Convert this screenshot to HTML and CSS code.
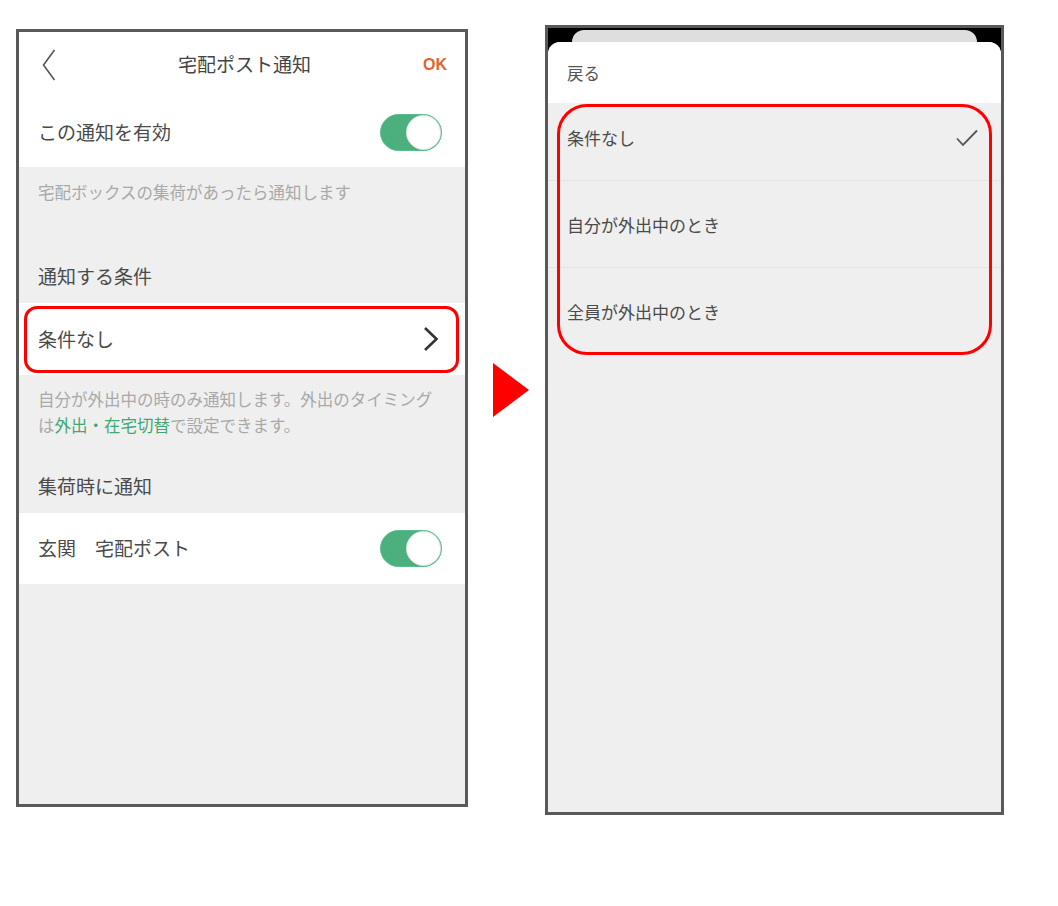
FILE: index.html
```html
<!DOCTYPE html>
<html lang="ja">
<head>
  <meta charset="UTF-8" />
  <meta name="viewport" content="width=device-width, initial-scale=1.0"/>
  <title>宅配ポスト通知</title>
  <link rel="stylesheet" href="styles.css">
</head>
<body>
  <div class="pagina">
    <!-- tela 1: configuracao -->
    <div class="tela tela-config">
      <header class="cabecalho">
        <svg class="voltar" width="14" height="32" viewBox="0 0 14 32"><polyline points="12.5,1 1.5,16 12.5,31" fill="none" stroke="#555" stroke-width="1.6"/></svg>
        <h1>宅配ポスト通知</h1>
        <span class="ok">OK</span>
      </header>
      <div class="linha linha-alta">
        <span>この通知を有効</span>
        <span class="chave"><span class="bolinha"></span></span>
      </div>
      <p class="nota nota-primeira">宅配ボックスの集荷があったら通知します</p>
      <h2 class="secao">通知する条件</h2>
      <div class="linha linha-marcada">
        <span>条件なし</span>
        <svg width="16" height="26" viewBox="0 0 16 26"><polyline points="2,2 13.5,13 2,24" fill="none" stroke="#333" stroke-width="2.6"/></svg>
      </div>
      <p class="nota">自分が外出中の時のみ通知します。外出のタイミング<br>は<span class="link">外出・在宅切替</span>で設定できます。</p>
      <h2 class="secao">集荷時に通知</h2>
      <div class="linha">
        <span>玄関　宅配ポスト</span>
        <span class="chave"><span class="bolinha"></span></span>
      </div>
    </div>

    <div class="seta"></div>

    <!-- tela 2: escolha da condicao -->
    <div class="tela tela-opcoes">
      <div class="fundo-escuro">
        <div class="cartao-atras"></div>
        <div class="folha">
          <div class="folha-topo">戻る</div>
          <div class="opcoes">
            <div class="opcao">
              <span>条件なし</span>
              <svg width="22" height="18" viewBox="0 0 22 18"><polyline points="1,9.5 7,16 21,1.5" fill="none" stroke="#555" stroke-width="1.8"/></svg>
            </div>
            <div class="opcao">自分が外出中のとき</div>
            <div class="opcao">全員が外出中のとき</div>
          </div>
        </div>
      </div>
    </div>
  </div>
</body>
</html>
```

FILE: styles.css
```css
body { margin: 0; background: #fff; font-family: "Noto Sans CJK JP", "Noto Sans", sans-serif; color: #4a4a4a; }
.pagina { display: flex; align-items: flex-start; padding: 25px 0 0 16px; }

.tela { box-sizing: border-box; border: 3px solid #595959; background: #efefef; }
.tela-config { width: 452px; height: 778px; margin-top: 4px; }
.tela-opcoes { width: 459px; height: 790px; margin-left: 16px; display: flex; flex-direction: column; }

.cabecalho { height: 65px; background: #fff; display: grid; grid-template-columns: 1fr auto 1fr; align-items: center; padding: 0 18px 0 23px; }
.cabecalho h1 { margin: 0 0 2px; font-size: 19px; font-weight: 400; color: #444; }
.voltar { display: block; }
.ok { justify-self: end; font-family: "Liberation Sans", Arial, sans-serif; font-weight: bold; font-size: 16px; color: #e2662b; }

.linha { position: relative; height: 71px; background: #fff; display: flex; align-items: center; justify-content: space-between; padding: 0 23px 0 19px; font-size: 19px; }
.linha > span:first-child { margin-bottom: 2px; }
.linha-alta { height: 70px; }
.linha-marcada { height: 72px; padding-right: 26px; }
.linha-marcada::after { content: ""; position: absolute; top: 3px; bottom: 2px; left: 5px; right: 6px; border: 3px solid #f00; border-radius: 13px; pointer-events: none; }
.linha svg { display: block; }

.chave { width: 62px; height: 37px; border-radius: 19px; background: #4caf7e; box-sizing: border-box; border: 1px solid #5dbb8d; display: flex; justify-content: flex-end; align-items: center; padding-right: 1px; }
.bolinha { width: 33px; height: 33px; border-radius: 50%; background: #fff; box-shadow: 0 0 0 1px #d8e6de, 0 1px 2px rgba(0,0,0,0.15); }

.nota { margin: 0; padding: 11px 20px 0 19px; font-size: 16.5px; line-height: 26px; color: #a9a9a9; }
.nota-primeira { padding-top: 12px; padding-bottom: 23px; }
.link { color: #3fa874; }
.secao { margin: 0; padding: 35px 20px 14px 19px; font-size: 19px; line-height: 26px; font-weight: 400; color: #4a4a4a; }

.seta { width: 0; height: 0; margin: 338px 0 0 25px; border-left: 36px solid #f00; border-top: 27px solid transparent; border-bottom: 27px solid transparent; }

.fundo-escuro { flex: 1; background: #000; padding-top: 2px; display: flex; flex-direction: column; }
.cartao-atras { height: 12px; margin: 0 24px; background: #dedede; border-radius: 13px 13px 0 0; }
.folha { flex: 1; background: #efefef; border-radius: 12px 12px 0 0; overflow: hidden; }
.folha-topo { height: 61px; background: #fff; display: flex; align-items: center; padding-left: 19px; font-size: 16.5px; color: #555; }

.opcoes { position: relative; }
.opcoes::after { content: ""; position: absolute; top: 1px; bottom: 0; left: 9px; right: 9px; border: 3px solid #f00; border-radius: 30px; pointer-events: none; }
.opcao { height: 87px; box-sizing: border-box; display: flex; align-items: center; justify-content: space-between; padding: 0 23px 0 19px; font-size: 17px; color: #4a4a4a; border-bottom: 1px solid #e3e3e3; }
.opcao:first-child { height: 78px; padding-bottom: 8px; }
.opcao:last-child { border-bottom: none; }
.opcao svg { display: block; }
```
